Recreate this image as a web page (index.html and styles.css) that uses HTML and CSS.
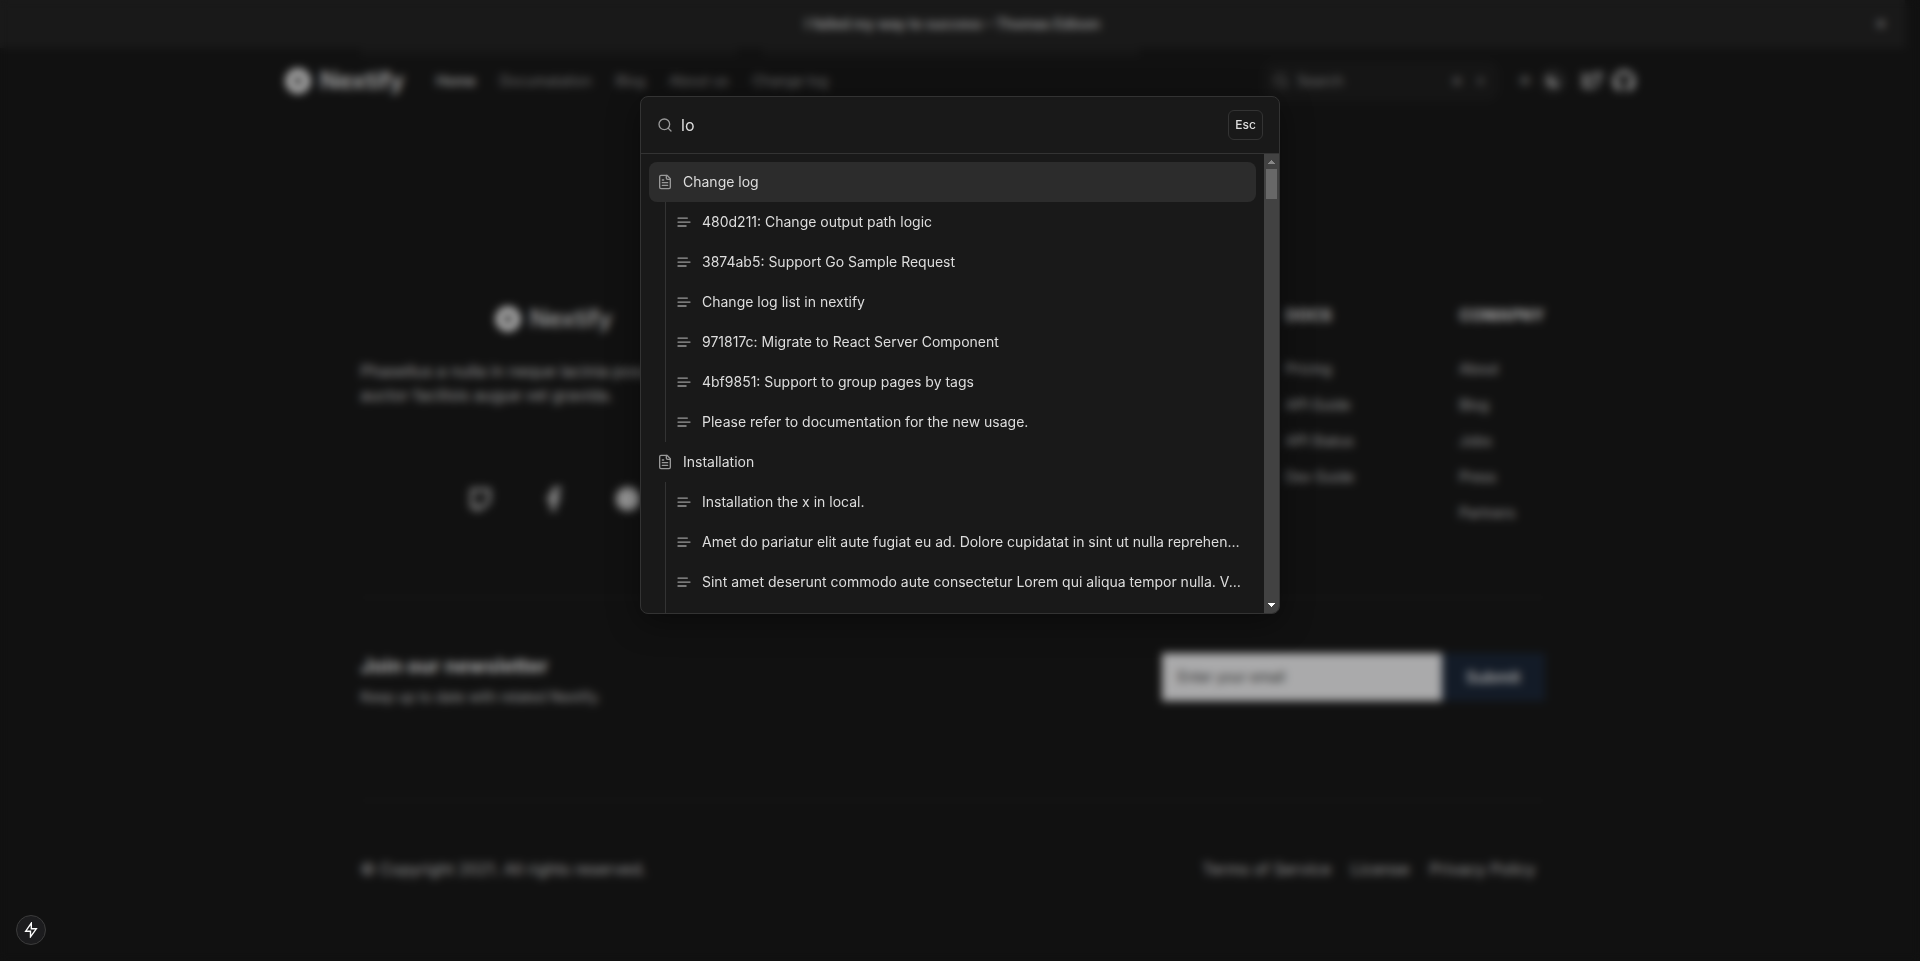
FILE: index.html
```html
<!DOCTYPE html>
<html lang="en">
<head>
<meta charset="utf-8">
<title>Nextify</title>
<link rel="stylesheet" href="styles.css">
</head>
<body>
<svg class="sprite" aria-hidden="true">
  <symbol id="logo" viewBox="0 0 26 26"><circle cx="13" cy="13" r="8.5" fill="none" stroke="currentColor" stroke-width="8"/><circle cx="13" cy="13" r="1.5" fill="currentColor"/></symbol>
  <symbol id="search" viewBox="0 0 24 24"><circle cx="11" cy="11" r="8"/><path d="m21 21-4.3-4.3"/></symbol>
  <symbol id="file" viewBox="0 0 24 24"><path d="M15 2H6a2 2 0 0 0-2 2v16a2 2 0 0 0 2 2h12a2 2 0 0 0 2-2V7Z"/><path d="M14 2v4a2 2 0 0 0 2 2h4M10 9H8M16 13H8M16 17H8"/></symbol>
  <symbol id="text" viewBox="0 0 24 24"><path d="M17 6.100H3M21 12.100H3M15.100 18H3"/></symbol>
  <symbol id="twitch" viewBox="0 0 24 24"><path fill="none" stroke="currentColor" stroke-width="3" d="M4 3h17v11l-6 6h-3l-3 3v-3H4z"/></symbol>
  <symbol id="twitter" viewBox="0 0 24 24"><path fill="none" stroke="currentColor" stroke-width="3" d="M22 4c-1 .6-2 1-3 1.300a4.500 4.500 0 0 0-7.500 4.200C8 9.500 5 8 3 5c-1 5 0 8 4 10-1.500 1.500-3.500 2-5 2 8 5 18 1 18-9.500z"/></symbol>
  <symbol id="github" viewBox="0 0 24 24"><path fill="currentColor" d="M12 0a12 12 0 0 0-4 23.400c.6.100.8-.3.800-.6v-5c0-1 .2-1.600.6-2-2.600-.3-5-1.300-5-5.400 0-1.300.4-2.300 1.200-3.200-.1-.3-.5-1.500.1-3.200 0 0 1-.3 3.300 1.200a11 11 0 0 1 6 0C17.300 3.700 18.300 4 18.300 4c.6 1.700.2 2.900.1 3.200.8.900 1.200 1.900 1.200 3.200 0 4.100-2.400 5.100-5 5.400.4.400.8 1.100.8 2.200v4.800c0 .3.200.7.800.6A12 12 0 0 0 12 0"/></symbol>
  <symbol id="facebook" viewBox="0 0 24 24"><path fill="currentColor" d="M9 24V14H5v-4.500h4V7c0-4.600 2.200-7 6-7h4v4.500h-3c-1.700 0-2.200.8-2.200 2.300v2.700h5L18 14h-4.200v10z"/></symbol>
  <symbol id="globe" viewBox="0 0 24 24"><circle cx="12" cy="12" r="12" fill="currentColor"/></symbol>
</svg>

<div class="page">
  <div class="banner">
    <p class="banner-text">I failed my way to success – Thomas Edison</p>
    <button class="banner-close" aria-label="Dismiss">✕</button>
  </div>
  <div class="cards"><div class="card"></div><div class="card"></div></div>
  <header class="header">
    <a class="brand" href="#"><svg class="brand-mark"><use href="#logo"/></svg>Nextify</a>
    <nav class="nav">
      <a class="nav-link active" href="#">Home</a>
      <a class="nav-link" href="#">Documatation</a>
      <a class="nav-link" href="#">Blog</a>
      <a class="nav-link" href="#">About us</a>
      <a class="nav-link" href="#">Change log</a>
    </nav>
    <div class="tools">
      <button class="search-button"><svg class="icon line"><use href="#search"/></svg><span class="search-label">Search</span><kbd class="key">⌘</kbd><kbd class="key">K</kbd></button>
      <div class="theme">
        <button class="theme-button" aria-label="Light">☀</button>
        <button class="theme-button chosen" aria-label="Dark"><svg class="icon" viewBox="0 0 24 24"><path fill="currentColor" d="M8 2a10 10 0 1 0 14 14A12 12 0 0 1 8 2"/></svg></button>
      </div>
      <div class="links">
        <a class="tool-link" href="#" aria-label="Twitter"><svg class="tool-icon"><use href="#twitter"/></svg></a>
        <a class="tool-link bright" href="#" aria-label="GitHub"><svg class="tool-icon"><use href="#github"/></svg></a>
      </div>
    </div>
  </header>

  <footer class="footer">
    <div class="footer-top">
      <div class="about">
        <a class="brand footer-brand" href="#"><svg class="brand-mark"><use href="#logo"/></svg>Nextify</a>
        <p class="about-text">Phasellus a nulla in neque lacinia posuere ac auctor facilisis augue vel gravida.</p>
        <div class="social">
          <a href="#" aria-label="Twitch"><svg class="social-icon"><use href="#twitch"/></svg></a>
          <a href="#" aria-label="Facebook"><svg class="social-icon"><use href="#facebook"/></svg></a>
          <a href="#" aria-label="Website"><svg class="social-icon"><use href="#globe"/></svg></a>
        </div>
      </div>
      <div class="columns">
        <div class="column"><h3 class="column-title">DOCS</h3><a href="#">Pricing</a><a href="#">API Guide</a><a href="#">API Status</a><a href="#">Dev Guide</a></div>
        <div class="column"><h3 class="column-title">COMAPNY</h3><a href="#">About</a><a href="#">Blog</a><a href="#">Jobs</a><a href="#">Press</a><a href="#">Partners</a></div>
      </div>
    </div>
    <div class="newsletter">
      <div>
        <h2 class="newsletter-title">Join our newsletter</h2>
        <p class="newsletter-text">Keep up to date with related Nextify.</p>
      </div>
      <form class="signup">
        <input class="email" type="email" aria-label="Email" placeholder="Enter your email">
        <button class="submit" type="button">Submit</button>
      </form>
    </div>
    <div class="legal">
      <p class="copyright">© Copyright 2021. All rights reserved.</p>
      <div class="legal-links"><a href="#">Terms of Service</a><a href="#">License</a><a href="#">Privacy Policy</a></div>
    </div>
  </footer>
</div>

<div class="overlay">
  <div class="dialog" role="dialog" aria-label="Search">
    <div class="dialog-head">
      <svg class="icon line"><use href="#search"/></svg>
      <input class="query" type="text" aria-label="Search" value="lo">
      <button class="esc">Esc</button>
    </div>
    <div class="results">
      <div class="list">
        <a class="row selected" href="#"><svg class="icon line"><use href="#file"/></svg><span class="label">Change log</span></a>
        <div class="group">
          <a class="row" href="#"><svg class="icon line"><use href="#text"/></svg><span class="label">480d211: Change output path logic</span></a>
          <a class="row" href="#"><svg class="icon line"><use href="#text"/></svg><span class="label">3874ab5: Support Go Sample Request</span></a>
          <a class="row" href="#"><svg class="icon line"><use href="#text"/></svg><span class="label">Change log list in nextify</span></a>
          <a class="row" href="#"><svg class="icon line"><use href="#text"/></svg><span class="label">971817c: Migrate to React Server Component</span></a>
          <a class="row" href="#"><svg class="icon line"><use href="#text"/></svg><span class="label">4bf9851: Support to group pages by tags</span></a>
          <a class="row" href="#"><svg class="icon line"><use href="#text"/></svg><span class="label">Please refer to documentation for the new usage.</span></a>
        </div>
        <a class="row" href="#"><svg class="icon line"><use href="#file"/></svg><span class="label">Installation</span></a>
        <div class="group last">
          <a class="row" href="#"><svg class="icon line"><use href="#text"/></svg><span class="label">Installation the x in local.</span></a>
          <a class="row" href="#"><svg class="icon line"><use href="#text"/></svg><span class="label">Amet do pariatur elit aute fugiat eu ad. Dolore cupidatat in sint ut nulla reprehenderit.</span></a>
          <a class="row" href="#"><svg class="icon line"><use href="#text"/></svg><span class="label">Sint amet deserunt commodo aute consectetur Lorem qui aliqua tempor nulla. Velit.</span></a>
        </div>
      </div>
      <div class="track" aria-hidden="true">
        <svg class="arrow dim" viewBox="0 0 7 4"><path d="M3 0h1v1h1v1h1v1h1v1H0V3h1V2h1V1h1z"/></svg>
        <div class="thumb"></div>
        <svg class="arrow down" viewBox="0 0 7 4"><path d="M0 0h7v1H6v1H5v1H4v1H3V3H2V2H1V1H0z"/></svg>
      </div>
    </div>
  </div>
</div>

<button class="dev" aria-label="Developer tools"><svg class="icon" viewBox="0 0 16 16"><path fill="none" stroke="currentColor" stroke-width="1.400" d="M8.300 1.200 2.700 9.200h4.800v5.600l5.800-8H8.300z"/></svg></button>
</body>
</html>
```
FILE: styles.css
```css
* { box-sizing: border-box; }
body { margin: 0; background: #111; color: #999; font: 14px/20px Inter, sans-serif; overflow: hidden; }
a { color: inherit; text-decoration: none; }
p, h2, h3 { margin: 0; }
button, input { font: inherit; color: inherit; background: none; border: 0; padding: 0; }
.sprite { position: absolute; width: 0; height: 0; }
.icon { width: 16px; height: 16px; flex: none; }
.line { fill: none; stroke: currentColor; stroke-width: 2; stroke-linecap: round; stroke-linejoin: round; }

/* Page */
.page { min-height: 100vh; }
.banner { display: flex; align-items: center; height: 48px; margin-right: 15px; padding: 0 16px; background: #191919; }
.banner-text { flex: 1; padding-left: 16px; text-align: center; font-weight: 600; color: #999; }
.banner-close { width: 16px; color: #999; }
.cards { display: flex; gap: 26px; max-width: 1199px; height: 8px; margin: 0 auto; }
.card { width: 376px; background: #161616; }
.header { display: flex; align-items: center; max-width: 1350px; height: 50px; margin: 0 auto; }
.brand { display: flex; align-items: center; gap: 9px; color: #aaa; font-size: 24px; line-height: 32px; font-weight: 600; }
.brand-mark { width: 26px; height: 26px; color: #b4b4b4; }
.nav { display: flex; gap: 24px; margin-left: 32px; }
.nav-link { color: #707070; }
.nav-link.active { color: #aaa; font-weight: 500; }
.tools { display: flex; align-items: center; margin-left: auto; }
.search-button { display: flex; align-items: center; gap: 8px; width: 236px; height: 40px; padding: 0 10px; border-radius: 12px; background: #151515; color: #707070; }
.search-label { flex: 1; text-align: left; }
.key { width: 16px; font: 10px/16px Inter, sans-serif; text-align: center; color: #777; }
.theme { display: flex; align-items: center; gap: 6px; margin-left: 16px; }
.theme-button { display: flex; align-items: center; justify-content: center; width: 20px; height: 24px; color: #777; }
.theme-button.chosen { width: 24px; border-radius: 12px; background: #222; color: #aaa; }
.links { display: flex; gap: 10px; margin-left: 16px; }
.tool-link { display: flex; color: #888; }
.tool-link.bright { color: #999; }
.tool-icon { width: 22px; height: 22px; }

.footer { max-width: 1199px; margin: 0 auto; padding: 197px 15px 0 0; }
.footer-top { display: flex; justify-content: space-between; padding-bottom: 74px; }
.about { width: 386px; }
.footer-brand { justify-content: center; font-weight: 500; }
.about-text { margin-top: 24px; font-size: 16px; line-height: 24px; }
.social { display: flex; justify-content: center; gap: 50px; margin-top: 80px; }
.social-icon { display: block; width: 24px; height: 24px; }
.columns { display: flex; gap: 105px; }
.column { display: flex; flex-direction: column; gap: 16px; color: #999; }
.column-title { margin-bottom: 16px; color: #aaa; font-size: 16px; line-height: 24px; font-weight: 700; }
.newsletter { display: flex; justify-content: space-between; height: 203px; padding-top: 55px; border-top: 1px solid #191919; }
.newsletter-title { color: #aaa; font-size: 20px; line-height: 26px; font-weight: 700; }
.newsletter-text { margin-top: 8px; }
.signup { display: flex; height: 48px; }
.email { width: 280px; padding: 0 16px; background: #aaaaab; }
.email::placeholder { color: #222; opacity: 1; }
.submit { padding: 0 24px; background: #131b27; color: #aaa; font-size: 16px; font-weight: 600; }
.legal { display: flex; justify-content: space-between; padding: 56px 9px 0 0; border-top: 1px solid #191919; font-size: 16px; line-height: 24px; }
.legal-links { display: flex; gap: 20px; }

/* Search dialog */
.overlay { position: fixed; inset: 0; padding-top: 96px; backdrop-filter: blur(4px); }
.dialog { width: 640px; max-width: 100%; margin: 0 auto; overflow: hidden; border: 1px solid #333; border-radius: 8px; background: #191919; color: #ddd; box-shadow: 0 8px 32px rgba(0, 0, 0, 0.4); }
.dialog-head { display: flex; align-items: center; gap: 8px; height: 57px; padding: 0 16px; border-bottom: 1px solid #333; color: #999; }
.query { flex: 1; min-width: 0; font-size: 16px; line-height: 24px; color: #ddd; outline: 0; }
.esc { width: 35px; height: 30px; border: 1px solid #333; border-radius: 6px; color: #ddd; font-size: 12px; font-weight: 500; }
.results { display: flex; }
.list { flex: 1; min-width: 0; padding: 8px 8px 0; }
.row { display: flex; align-items: center; gap: 10px; height: 40px; padding: 0 8px; border-radius: 8px; }
.row .icon { color: #999; }
.selected { background: #2c2c2c; }
.label { overflow: hidden; white-space: nowrap; text-overflow: ellipsis; }
.group { margin-left: 16px; padding-left: 2px; border-left: 1px solid #333; }
.last { padding-bottom: 11px; }
.track { display: flex; flex-direction: column; align-items: center; width: 15px; padding: 6px 0; background: #424242; }
.arrow { width: 7px; height: 4px; fill: #fff; }
.dim { fill: #888; }
.thumb { width: 11px; height: 30px; margin-top: 5px; background: #686868; }
.down { margin-top: auto; }

.dev { position: fixed; left: 16px; bottom: 16px; display: flex; align-items: center; justify-content: center; width: 30px; height: 30px; border: 1px solid #3c3c3c; border-radius: 50%; background: #1c1c1e; color: #fff; }
```
